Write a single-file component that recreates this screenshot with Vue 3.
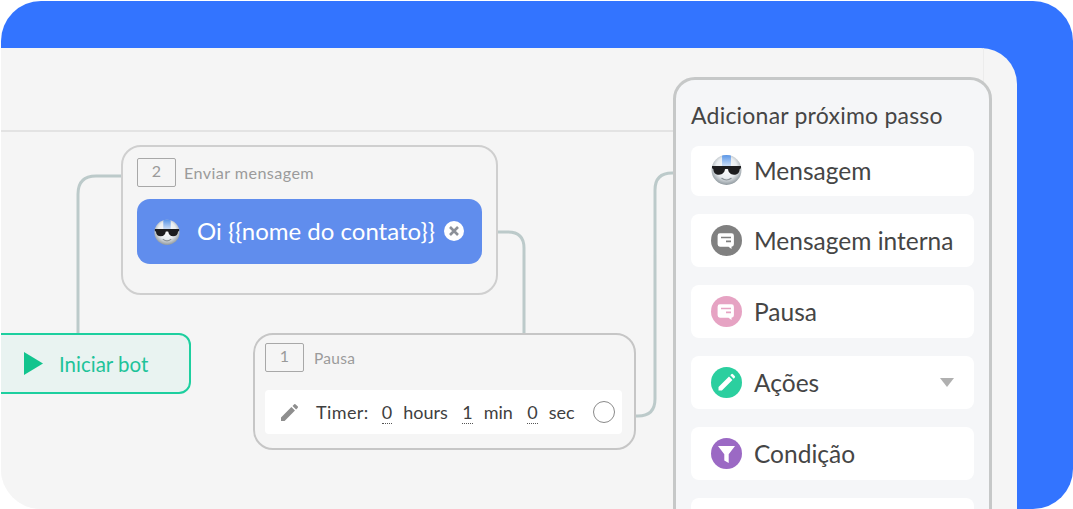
<script setup>
const steps = [
  { name: "Mensagem", icon: "bot" },
  { name: "Mensagem interna", icon: "chat", color: "#808080" },
  { name: "Pausa", icon: "chat", color: "#e6a3c3" },
  { name: "Ações", icon: "pencil", color: "#2bcf9f", arrow: true },
  { name: "Condição", icon: "filter", color: "#9b69c4" },
  { name: "", icon: "blank", color: "#e6a3c3" },
];
</script>

<template>
  <div class="frame">
    <svg class="defs" width="0" height="0">
      <defs>
        <linearGradient id="stripe" x1="0" y1="0" x2="0" y2="1">
          <stop offset="0" stop-color="#4f8fe6" />
          <stop offset="1" stop-color="#cfe0f6" />
        </linearGradient>
        <radialGradient id="face" cx="0.5" cy="0.42" r="0.58">
          <stop offset="0" stop-color="#ffffff" />
          <stop offset="0.6" stop-color="#e9edf0" />
          <stop offset="1" stop-color="#8f989e" />
        </radialGradient>
        <clipPath id="head"><circle cx="15" cy="15.5" r="14.5" /></clipPath>
        <symbol id="bot" viewBox="0 0 30 30">
          <circle cx="15" cy="15.5" r="14.5" fill="url(#face)" />
          <rect x="10.7" y="0" width="8.6" height="12" fill="url(#stripe)" clip-path="url(#head)" />
          <path d="M1 11.500h28v2.400l-1.200.5c-.4 4-2.400 5.600-5.600 5.600-3.400 0-5.400-2.200-5.700-5.200-.7-.5-2.300-.5-3 0-.3 3-2.300 5.200-5.700 5.200-3.200 0-5.200-1.600-5.600-5.600L1 13.900z" fill="#1d1d1f" />
          <path d="M10.500 23.500c2.600 2 6.400 2 9 0" fill="none" stroke="#8b9398" stroke-width="1.200" stroke-linecap="round" />
        </symbol>
      </defs>
    </svg>

    <div class="canvas">
      <div class="rule"></div>
      <div class="edge"></div>

      <svg class="links" width="1016" height="461" fill="none" stroke="#bccaca" stroke-width="3">
        <path d="M77 285V146q0-18 18-18h26" />
        <path d="M497 184h10q16 0 16 16v86" />
        <path d="M635 368h2q17 0 17-17V142q0-17 17-17h3" />
      </svg>

      <div class="node node-send">
        <div class="node-head">
          <span class="num">2</span>
          <span class="node-title">Enviar mensagem</span>
        </div>
        <div class="bubble">
          <svg class="bubble-bot" width="26" height="26"><use href="#bot" /></svg>
          <span class="bubble-text">Oi {{ "{" }}{{ "{" }}nome do contato{{ "}" }}{{ "}" }}</span>
          <svg class="close" width="20" height="20" viewBox="0 0 20 20">
            <circle cx="10" cy="10" r="10" fill="#fff" />
            <path d="M6 6l8 8M14 6l-8 8" stroke="#8c9098" stroke-width="2.600" />
          </svg>
        </div>
      </div>

      <div class="start">
        <svg width="19" height="23" viewBox="0 0 20 24"><path d="M0 0l20 12L0 24z" fill="#12c48e" /></svg>
        <span>Iniciar bot</span>
      </div>

      <div class="node node-pause">
        <div class="node-head">
          <span class="num">1</span>
          <span class="node-title short">Pausa</span>
        </div>
        <div class="timer">
          <svg class="timer-pencil" width="17" height="17" viewBox="0 0 18 18">
            <path d="M0 18v-3.800L11 3.200 14.800 7 3.800 18zM12.200 2l1.600-1.600a1.200 1.200 0 0 1 1.700 0l2.100 2.100a1.200 1.200 0 0 1 0 1.700L16 5.800z" fill="#8e8e8e" />
          </svg>
          <span class="timer-text">Timer:</span>
          <span class="val">0</span><span>hours</span>
          <span class="val">1</span><span>min</span>
          <span class="val">0</span><span>sec</span>
          <span class="radio"></span>
        </div>
      </div>

      <div class="panel">
        <div class="panel-title">Adicionar próximo passo</div>
        <div v-for="step in steps" :key="step.name" class="step">
          <svg v-if="step.icon === 'bot'" class="step-icon step-bot" width="31" height="31"><use href="#bot" /></svg>
          <svg v-else class="step-icon" width="31" height="31" viewBox="0 0 31 31">
            <circle cx="15.5" cy="15.5" r="15.5" :fill="step.color" />
            <g v-if="step.icon === 'chat'">
              <path d="M9 8.300h11.500a2.400 2.400 0 0 1 2.400 2.400v8.600a2.400 2.400 0 0 1-2.400 2.400v2.400l-3-2.400H9a2.400 2.400 0 0 1-2.400-2.400v-8.600A2.400 2.400 0 0 1 9 8.300z" fill="#fff" />
              <path d="M10 12.500h10M15 16.300h5" :stroke="step.color" stroke-width="1.700" fill="none" />
            </g>
            <path v-else-if="step.icon === 'pencil'" d="M7.500 23.500v-3.400L18 9.600l3.400 3.400L10.900 23.500zM19.300 8.300l1-1a1.200 1.200 0 0 1 1.700 0l1.700 1.700a1.200 1.200 0 0 1 0 1.700l-1 1z" fill="#fff" />
            <path v-else-if="step.icon === 'filter'" d="M7 8h17l-6.300 8.300V25l-4.400-2.500v-6.200z" fill="#fff" />
          </svg>
          <span class="step-name">{{ step.name }}</span>
          <span v-if="step.arrow" class="arrow"></span>
        </div>
      </div>
    </div>
  </div>
</template>

<style>
html, body {
  background: #fff;
}
</style>

<style scoped>
.frame {
  display: flex;
  box-sizing: border-box;
  width: 1072px;
  height: 508px;
  margin: 1px 0 0 1px;
  padding: 47px 56px 0 0;
  background:
    linear-gradient(#3374ff 60px, transparent 60px),
    linear-gradient(90deg, #f5f5f5 1000px, #3374ff 1000px);
  border-radius: 40px;
  overflow: hidden;
  font-family: Lato, "Noto Sans", sans-serif;
}

.defs {
  position: absolute;
}

.canvas {
  position: relative;
  flex: 1;
  background: #f5f5f5;
  border-top-right-radius: 36px;
  overflow: hidden;
}

.rule {
  position: absolute;
  left: 0;
  top: 82px;
  width: 680px;
  height: 2px;
  background: #e3e3e3;
}

.edge {
  position: absolute;
  left: 982px;
  top: 0;
  width: 1px;
  height: 40px;
  background: #ececec;
}

.links {
  position: absolute;
  left: 0;
  top: 0;
}

.node {
  position: absolute;
  box-sizing: border-box;
  background: #f5f5f5;
  border: 2px solid #cfcfcf;
  border-radius: 20px;
}

.node-send {
  left: 120px;
  top: 97px;
  width: 377px;
  height: 150px;
  padding: 11px 14px;
}

.node-pause {
  left: 252px;
  top: 285px;
  width: 383px;
  height: 117px;
  padding: 8px 12px 8px 10px;
  border-color: #c6c6c6;
}

.node-head {
  display: flex;
  align-items: center;
  gap: 8px;
}

.num {
  box-sizing: border-box;
  width: 39px;
  height: 29px;
  border: 1.5px solid #a8a8a8;
  border-radius: 2px;
  text-align: center;
  font-size: 16px;
  line-height: 24px;
  color: #9a9a9a;
}

.node-title {
  font-size: 16.2px;
  letter-spacing: 0.4px;
  color: #9b9b9b;
}

.node-title.short {
  margin-left: 2px;
  font-size: 15.5px;
  letter-spacing: 0.3px;
}

.bubble {
  display: flex;
  align-items: center;
  height: 65px;
  margin-top: 12px;
  padding: 0 18px 0 17px;
  border-radius: 13px;
  background: #608ded;
  color: #fff;
}

.bubble-text {
  margin-left: 17px;
  margin-top: -2px;
  font-size: 24px;
  white-space: nowrap;
}

.close {
  margin-left: auto;
  margin-top: -1px;
}

.start {
  position: absolute;
  left: -20px;
  top: 285px;
  display: flex;
  align-items: center;
  box-sizing: border-box;
  width: 210px;
  height: 61px;
  padding-left: 41px;
  gap: 16px;
  background: #e9f3f1;
  border: 2px solid #1dcf9f;
  border-radius: 12px;
  color: #1ec39a;
  font-size: 20.5px;
}

.timer {
  display: flex;
  align-items: center;
  height: 44px;
  margin-top: 18px;
  padding: 0 7px 0 16px;
  border-radius: 4px;
  background: #fff;
  color: #3f3f3f;
  font-size: 18px;
  white-space: nowrap;
}

.timer-text {
  margin-left: 18px;
  margin-right: -1.5px;
  letter-spacing: 0.4px;
}

.val {
  margin: 0 11px 0 14.5px;
  border-bottom: 1px dotted #555;
  line-height: 22px;
}

.radio {
  box-sizing: border-box;
  width: 22px;
  height: 22px;
  margin-left: auto;
  border: 1px solid #8a8a8a;
  border-radius: 50%;
  background: #fff;
}

.panel {
  position: absolute;
  left: 672px;
  top: 29px;
  box-sizing: border-box;
  width: 319px;
  height: 460px;
  padding: 21px 15px 0;
  background: #f5f6f8;
  border: 3px solid #c6c8c8;
  border-radius: 22px;
}

.panel-title {
  font-size: 23px;
  letter-spacing: 0.22px;
  line-height: 28px;
  color: #454545;
  white-space: nowrap;
}

.step {
  display: flex;
  align-items: center;
  box-sizing: border-box;
  height: 52.5px;
  margin-top: 18.5px;
  padding-left: 20px;
  border-radius: 8px;
  background: #fff;
}

.panel-title + .step {
  height: 49.5px;
  margin-top: 17px;
}

.step-bot {
  margin-top: -2px;
}

.step-name {
  margin-left: 12px;
  font-size: 24.5px;
  color: #454545;
  white-space: nowrap;
}

.arrow {
  margin-left: auto;
  margin-right: 20px;
  border-left: 7px solid transparent;
  border-right: 7px solid transparent;
  border-top: 9px solid #b0b0b0;
}
</style>
